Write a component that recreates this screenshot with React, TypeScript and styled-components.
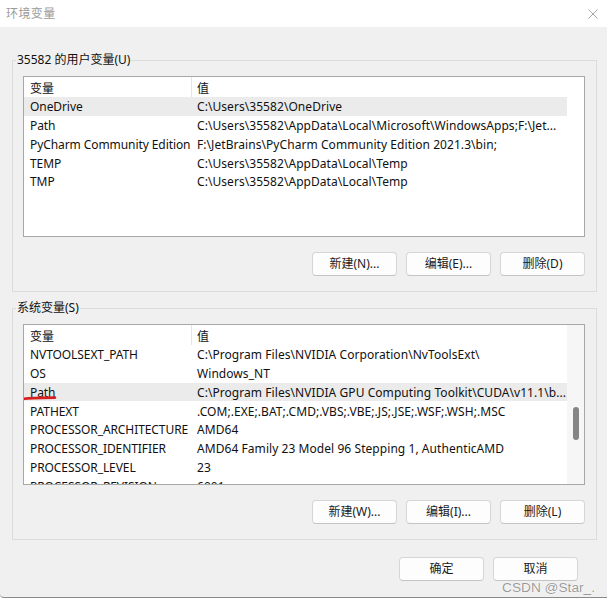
import React from "react";
import styled, { createGlobalStyle } from "styled-components";

const GlobalStyle = createGlobalStyle`
  html, body {
    margin: 0;
    padding: 0;
    background: #ffffff;
  }
  body {
    font-family: "Noto Sans", "Noto Sans CJK SC", sans-serif;
    font-size: 12px;
    color: #000;
  }
`;

const Window = styled.div`
  position: relative;
  width: 607px;
  height: 597px;
  display: flex;
  flex-direction: column;
  background: #f0f0f0;
  border-bottom: 1px solid #8a8a8a;
  border-bottom-left-radius: 4px;
  overflow: hidden;
`;

const TitleBar = styled.div`
  height: 27px;
  box-sizing: border-box;
  flex: none;
  display: flex;
  align-items: center;
  justify-content: space-between;
  padding: 1px 9px 0 6px;
  background: #ffffff;
`;

const Title = styled.span`
  font-size: 12px;
  line-height: 16px;
  color: #9a9a9a;
  letter-spacing: 0.4px;
`;

const Body = styled.div`
  flex: 1;
  display: flex;
  flex-direction: column;
  padding: 25px 10px 0 12px;
`;

const Group = styled.fieldset<{ $gapTop?: number }>`
  margin: ${(p) => p.$gapTop ?? 0}px 0 0 0;
  padding: 0;
  border: 1px solid #dcdcdc;
  min-inline-size: 0;
`;

const Legend = styled.legend`
  margin-left: 3px;
  padding: 0 1px;
  font-size: 12px;
  line-height: 16px;
  color: #111;
`;

const GroupBody = styled.div`
  display: flex;
  flex-direction: column;
  gap: 15px;
  padding: 8px 11px 15px 10px;
`;

const List = styled.div`
  height: 161px;
  box-sizing: border-box;
  display: flex;
  border: 1px solid #a8a8a8;
  background: #ffffff;
  overflow: hidden;
`;

const Rows = styled.div`
  flex: 1;
  min-width: 0;
  display: flex;
  flex-direction: column;
`;

const HeaderRow = styled.div`
  flex: none;
  height: 20px;
  display: grid;
  grid-template-columns: 168px 1fr;
  align-items: stretch;
`;

const HeaderCell = styled.div<{ $divider?: boolean }>`
  display: flex;
  align-items: center;
  padding-left: ${(p) => (p.$divider ? 6 : 5)}px;
  padding-top: 1px;
  border-right: ${(p) => (p.$divider ? "1px solid #e5e5e5" : "none")};
  color: #111;
`;

const Row = styled.div<{ $selected?: boolean }>`
  flex: none;
  height: 18.75px;
  display: grid;
  grid-template-columns: 168px 1fr;
  align-items: center;
  padding-top: 1px;
  box-sizing: border-box;
  background: ${(p) => (p.$selected ? "#ebebeb" : "transparent")};
`;

const NameCell = styled.div`
  position: relative;
  padding-left: 6px;
  white-space: nowrap;
  overflow: visible;
  color: #111;
  letter-spacing: -0.08px;
`;

const ValueCell = styled.div`
  padding-left: 5px;
  white-space: nowrap;
  overflow: hidden;
  color: #111;
  letter-spacing: 0.06px;
`;

const Track = styled.div<{ $visible?: boolean }>`
  flex: none;
  width: 17px;
  background: ${(p) => (p.$visible ? "#f6f6f6" : "transparent")};
  display: flex;
  justify-content: center;
  padding-top: 82px;
  box-sizing: border-box;
`;

const Thumb = styled.div`
  width: 6px;
  height: 33px;
  border-radius: 3px;
  background: #858585;
`;

const Mark = styled.svg`
  position: absolute;
  left: -3px;
  top: 11px;
  pointer-events: none;
`;

const ButtonRow = styled.div<{ $right?: number }>`
  display: flex;
  justify-content: flex-end;
  gap: 9px;
  margin-right: ${(p) => p.$right ?? 0}px;
`;

const Button = styled.button`
  width: 85px;
  height: 24px;
  box-sizing: border-box;
  padding: 0;
  border: 1px solid #d6d6d6;
  border-bottom-color: #c4c4c4;
  border-radius: 4px;
  background: #fdfdfd;
  font-family: "Noto Sans", "Noto Sans CJK SC", sans-serif;
  font-size: 12px;
  line-height: 16px;
  color: #1a1a1a;
`;

const Footer = styled.div`
  padding-top: 17px;
`;

const Watermark = styled.div`
  position: absolute;
  left: 502px;
  top: 581px;
  font-family: "Liberation Sans", Arial, sans-serif;
  font-size: 13.7px;
  line-height: 14px;
  color: rgba(120, 120, 120, 0.75);
  text-shadow: 0 0 1px #fff, 0 0 1px #fff;
  white-space: nowrap;
`;

type Pair = [string, string];

const userVars: Pair[] = [
  ["OneDrive", "C:\\Users\\35582\\OneDrive"],
  ["Path", "C:\\Users\\35582\\AppData\\Local\\Microsoft\\WindowsApps;F:\\Jet..."],
  ["PyCharm Community Edition", "F:\\JetBrains\\PyCharm Community Edition 2021.3\\bin;"],
  ["TEMP", "C:\\Users\\35582\\AppData\\Local\\Temp"],
  ["TMP", "C:\\Users\\35582\\AppData\\Local\\Temp"],
];

const sysVars: Pair[] = [
  ["NVTOOLSEXT_PATH", "C:\\Program Files\\NVIDIA Corporation\\NvToolsExt\\"],
  ["OS", "Windows_NT"],
  ["Path", "C:\\Program Files\\NVIDIA GPU Computing Toolkit\\CUDA\\v11.1\\b..."],
  ["PATHEXT", ".COM;.EXE;.BAT;.CMD;.VBS;.VBE;.JS;.JSE;.WSF;.WSH;.MSC"],
  ["PROCESSOR_ARCHITECTURE", "AMD64"],
  ["PROCESSOR_IDENTIFIER", "AMD64 Family 23 Model 96 Stepping 1, AuthenticAMD"],
  ["PROCESSOR_LEVEL", "23"],
  ["PROCESSOR_REVISION", "6001"],
];

function VarList({
  rows,
  selected,
  marked,
  scroll,
}: {
  rows: Pair[];
  selected: number;
  marked?: number;
  scroll?: boolean;
}) {
  return (
    <List>
      <Rows>
        <HeaderRow>
          <HeaderCell $divider>变量</HeaderCell>
          <HeaderCell>值</HeaderCell>
        </HeaderRow>
        {rows.map(([k, v], i) => (
          <Row key={k + i} $selected={i === selected}>
            <NameCell>
              {k}
              {i === marked && (
                <Mark width="36" height="6" viewBox="0 0 36 6">
                  <path
                    d="M1.5 4.3 C 3 3.2, 12 2.8, 34 2.6"
                    fill="none"
                    stroke="#d81e1e"
                    strokeWidth="2.6"
                    strokeLinecap="round"
                  />
                </Mark>
              )}
            </NameCell>
            <ValueCell>{v}</ValueCell>
          </Row>
        ))}
      </Rows>
      <Track $visible={scroll}>{scroll && <Thumb />}</Track>
    </List>
  );
}

export default function App() {
  return (
    <>
      <GlobalStyle />
      <Window>
        <TitleBar>
          <Title>环境变量</Title>
          <svg width="10" height="10" viewBox="0 0 10 10">
            <path d="M0.5 0.5 L9.5 9.5 M9.5 0.5 L0.5 9.5" stroke="#a8a8a8" strokeWidth="1" />
          </svg>
        </TitleBar>
        <Body>
          <Group>
            <Legend>35582 的用户变量(U)</Legend>
            <GroupBody>
              <VarList rows={userVars} selected={0} />
              <ButtonRow>
                <Button>新建(N)...</Button>
                <Button>编辑(E)...</Button>
                <Button>删除(D)</Button>
              </ButtonRow>
            </GroupBody>
          </Group>
          <Group $gapTop={8}>
            <Legend>系统变量(S)</Legend>
            <GroupBody>
              <VarList rows={sysVars} selected={2} marked={2} scroll />
              <ButtonRow>
                <Button>新建(W)...</Button>
                <Button>编辑(I)...</Button>
                <Button>删除(L)</Button>
              </ButtonRow>
            </GroupBody>
          </Group>
          <Footer>
            <ButtonRow $right={19}>
              <Button>确定</Button>
              <Button>取消</Button>
            </ButtonRow>
          </Footer>
        </Body>
        <Watermark>CSDN @Star_.</Watermark>
      </Window>
    </>
  );
}
